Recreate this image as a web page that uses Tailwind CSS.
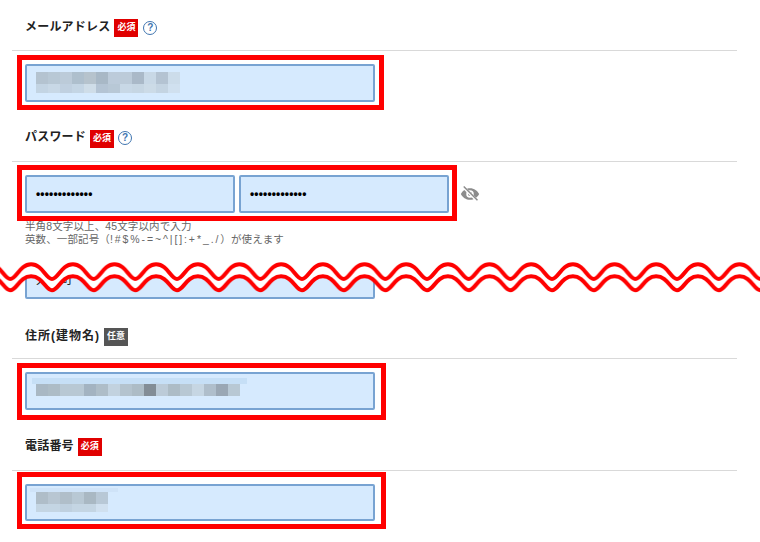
<!DOCTYPE html>
<html lang="ja">
<head>
<meta charset="UTF-8">
<title>会員登録フォーム</title>
<script src="https://cdn.jsdelivr.net/npm/@tailwindcss/browser@4"></script>
</head>
<body class="bg-white">
<div class="relative w-[760px] h-[542px] overflow-hidden font-['Liberation_Sans','Noto_Sans_CJK_JP',sans-serif] text-[#222]">
  <div class="pl-3 w-[737px]">

    <!-- メールアドレス -->
    <div class="h-[51px] border-b border-[#d9d9d9] pl-[13px] pt-[19px] flex items-start gap-1">
      <span class="text-[12px] leading-[17px] font-bold tracking-[0.2px]">メールアドレス</span>
      <span class="w-6 h-[18px] bg-[#e00000] text-white text-[9px] font-bold flex items-center justify-center">必須</span>
      <span class="ml-[1px] mt-[2px] w-[14px] h-[14px] rounded-full border border-[#3f75b0] text-[#3f75b0] text-[10px] leading-none font-bold flex items-center justify-center">?</span>
    </div>
    <div class="ml-[5px] mt-[4px] w-[367px] h-[55px] border-[5px] border-[#f00] pt-1 pl-[3px]">
      <div class="w-[350px] h-[38px] bg-[#d6eafe] border-2 border-[#78a3d2] rounded-[2px] pl-[9px] pt-[6px]">
        <div class="flex h-3">
          <i class="w-3 bg-[#b4c3d0]"></i><i class="w-3 bg-[#b8c8d5]"></i><i class="w-3 bg-[#bccbd9]"></i><i class="w-3 bg-[#aebfcd]"></i><i class="w-3 bg-[#b6c3cd]"></i><i class="w-3 bg-[#a8b8c6]"></i><i class="w-3 bg-[#bccbda]"></i><i class="w-3 bg-[#bccbd9]"></i><i class="w-3 bg-[#aab9c8]"></i><i class="w-3 bg-[#c8d8e6]"></i><i class="w-3 bg-[#b4c3d2]"></i><i class="w-3 bg-[#ccdcea]"></i>
        </div>
        <div class="flex h-[9px]">
          <i class="w-3 bg-[#c3d4e3]"></i><i class="w-3 bg-[#c8d8e6]"></i><i class="w-3 bg-[#c0d0e0]"></i><i class="w-3 bg-[#c4d5e4]"></i><i class="w-3 bg-[#cfdde8]"></i><i class="w-3 bg-[#b4c4d4]"></i><i class="w-3 bg-[#b8c8d6]"></i><i class="w-3 bg-[#c8d8e6]"></i><i class="w-3 bg-[#c6d6e3]"></i><i class="w-3 bg-[#ccdbe7]"></i><i class="w-3 bg-[#c4d4e2]"></i><i class="w-3 bg-[#d0e0ef]"></i>
        </div>
      </div>
    </div>

    <!-- パスワード -->
    <div class="h-[52px] border-b border-[#d9d9d9] pl-[13px] pt-[20px] flex items-start gap-1">
      <span class="text-[12px] leading-[14px] font-bold tracking-[0.2px]">パスワード</span>
      <span class="w-6 h-[18px] bg-[#e00000] text-white text-[9px] font-bold flex items-center justify-center">必須</span>
      <span class="mt-[1px] w-[14px] h-[14px] rounded-full border border-[#3f75b0] text-[#3f75b0] text-[10px] leading-none font-bold flex items-center justify-center">?</span>
    </div>
    <div class="ml-[5px] mt-[3px] flex items-center gap-[3px]">
      <div class="w-[440px] h-[56px] border-[5px] border-[#f00] pl-[3px] pt-[5px] flex gap-1 items-start">
        <div class="w-[210px] h-[38px] bg-[#d6eafe] border-2 border-[#78a3d2] rounded-[2px] pl-[9px] text-[12px] font-bold text-black leading-[34px] tracking-[0.15px]">•••••••••••••</div>
        <div class="w-[210px] h-[38px] bg-[#d6eafe] border-2 border-[#78a3d2] rounded-[2px] pl-[9px] text-[12px] font-bold text-black leading-[34px] tracking-[0.15px]">•••••••••••••</div>
      </div>
      <svg class="w-5 h-5 mt-[2px]" viewBox="0 0 24 24" fill="#8c8c8c">
        <path d="M12 5C7 5 3 8 1 12c2 4 6 7 11 7s9-3 11-7c-2-4-6-7-11-7zm0 11.5a4.5 4.5 0 1 1 0-9 4.500 4.500 0 0 1 0 9z"/>
        <circle cx="12" cy="12" r="2.500"/>
        <path d="M4 3.500 20.500 20" stroke="#fff" stroke-width="3.500"/>
        <path d="M4.500 3 21 19.500" stroke="#8c8c8c" stroke-width="1.800"/>
      </svg>
    </div>
    <div class="pl-[13px] -mt-[1px] text-[10.500px] leading-[13px] text-[#666] tracking-[0.12px]">
      <p>半角8文字以上、45文字以内で入力</p>
      <p>英数、一部記号（<span class="tracking-[1.900px]">!#$%-=~^|[]:+*_./</span>）が使えます</p>
    </div>

    <!-- 住所(番地) -->
    <div class="ml-[13px] mt-[21px] w-[350px] h-[32px] bg-[#d6eafe] border-2 border-[#78a3d2] rounded-[2px] pl-[9px] pt-[3px] text-[12px] leading-[16px] tracking-[0.3px]">大手町</div>

    <!-- 住所(建物名) -->
    <div class="h-[60px] border-b border-[#d9d9d9] pl-[13px] pt-[29px] flex items-start gap-1">
      <span class="text-[12px] leading-[17px] font-bold tracking-[1px]">住所(建物名)</span>
      <span class="w-6 h-[18px] bg-[#555] text-white text-[9px] font-bold flex items-center justify-center">任意</span>
    </div>
    <div class="ml-[5px] mt-[4px] w-[369px] h-[57px] border-[5px] border-[#f00] pt-1 pl-[3px]">
      <div class="w-[350px] h-[38px] bg-[#d6eafe] border-2 border-[#78a3d2] rounded-[2px] pt-[4px] pl-[5px]">
        <div class="w-[215px] h-[6px] bg-[#c6dff6]"></div>
        <div class="flex h-3 ml-1">
          <i class="w-3 bg-[#a9b8c4]"></i><i class="w-3 bg-[#adbcc6]"></i><i class="w-3 bg-[#b8c8d4]"></i><i class="w-3 bg-[#b8c8d4]"></i><i class="w-3 bg-[#a3b3c1]"></i><i class="w-3 bg-[#aebdc8]"></i><i class="w-3 bg-[#c2d2df]"></i><i class="w-3 bg-[#b4c3ce]"></i><i class="w-3 bg-[#adbcc6]"></i><i class="w-3 bg-[#838d96]"></i><i class="w-3 bg-[#bccbd8]"></i><i class="w-3 bg-[#adbcc6]"></i><i class="w-3 bg-[#b8c8d4]"></i><i class="w-3 bg-[#c6d6e3]"></i><i class="w-3 bg-[#afbecb]"></i><i class="w-3 bg-[#9aa7b4]"></i><i class="w-3 bg-[#b8c8d4]"></i>
        </div>
      </div>
    </div>

    <!-- 電話番号 -->
    <div class="h-[51px] border-b border-[#d9d9d9] pl-[13px] pt-[18px] flex items-start gap-1">
      <span class="text-[12px] leading-[17px] font-bold tracking-[0.2px]">電話番号</span>
      <span class="w-6 h-[18px] bg-[#e00000] text-white text-[9px] font-bold flex items-center justify-center">必須</span>
    </div>
    <div class="ml-[5px] mt-[1px] w-[369px] h-[57px] border-[5px] border-[#f00] pt-[7px] pl-[3px]">
      <div class="w-[350px] h-[37px] bg-[#d6eafe] border-2 border-[#78a3d2] rounded-[2px] pt-[2px] pl-[3px]">
        <div class="w-[88px] h-[4px] bg-[#cfe3f8]"></div>
        <div class="flex h-3 ml-[6px]">
          <i class="w-3 bg-[#afbdc8]"></i><i class="w-3 bg-[#b8c6d2]"></i><i class="w-3 bg-[#b0bec9]"></i><i class="w-3 bg-[#b8c8d4]"></i><i class="w-3 bg-[#a9b8c3]"></i><i class="w-3 bg-[#b8c8d6]"></i>
        </div>
        <div class="flex h-2 ml-[6px]">
          <i class="w-3 bg-[#c4d5e3]"></i><i class="w-3 bg-[#c4d5e3]"></i><i class="w-3 bg-[#bfd0df]"></i><i class="w-3 bg-[#c4d5e3]"></i><i class="w-3 bg-[#c4d5e3]"></i><i class="w-3 bg-[#d0e0ef]"></i>
        </div>
      </div>
    </div>
  </div>

  <!-- 省略の波線 -->
  <svg class="absolute left-0 top-[250px]" width="760" height="50">
    <defs>
      <pattern id="wave" x="-10.500" y="0" width="41.670" height="50" patternUnits="userSpaceOnUse">
        <path d="M0 0V26.300C11.500 26.300 14.500 40.300 20.830 40.300C27.100 40.300 30.200 26.300 41.670 26.300V0Z" fill="#fff"/>
        <path d="M0 14.300C11.500 14.300 14.500 29 20.830 29C27.100 29 30.200 14.300 41.670 14.300" fill="none" stroke="#f00" stroke-width="4"/>
        <path d="M0 26.300C11.500 26.300 14.500 40.300 20.830 40.300C27.100 40.300 30.200 26.300 41.670 26.300" fill="none" stroke="#f00" stroke-width="4"/>
      </pattern>
    </defs>
    <rect width="760" height="50" fill="url(#wave)"/>
  </svg>
</div>
</body>
</html>
